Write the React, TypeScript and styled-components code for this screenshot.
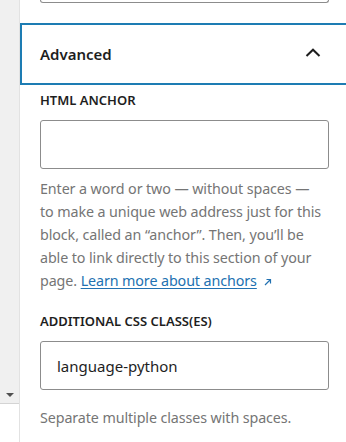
import React from "react";
import styled, { createGlobalStyle } from "styled-components";

const Global = createGlobalStyle`
  html, body { margin: 0; padding: 0; background: #fff; }
  body { width: 346px; height: 442px; overflow: hidden; font-family: "Noto Sans", "Open Sans", sans-serif; color: #1e1e1e; }
`;

const Page = styled.div`
  display: flex;
  width: 346px;
  height: 442px;
  overflow: hidden;
`;

const Gutter = styled.div`
  width: 19px;
  flex: none;
  display: flex;
  flex-direction: column;
  border-right: 1px solid #e2e2e2;
`;

const Track = styled.div`
  flex: 1;
  background: #f0f0f0;
  display: flex;
  align-items: flex-end;
  justify-content: center;
  padding-bottom: 6px;
`;

const TrackEnd = styled.div`
  height: 38px;
  border-top: 1px solid #d4d4d4;
  background: #fff;
`;

const ArrowDown = styled.div`
  width: 0;
  height: 0;
  border-left: 4px solid transparent;
  border-right: 4px solid transparent;
  border-top: 4px solid #505050;
`;

const Main = styled.div`
  flex: 1;
  min-width: 0;
  display: flex;
  flex-direction: column;
`;

const TopStub = styled.div`
  margin: 0 17px 0 20px;
  height: 2px;
  border: 1px solid #8c8c8c;
  border-top: none;
  border-radius: 0 0 3px 3px;
`;

const Header = styled.div`
  margin-top: 20px;
  height: 62px;
  width: calc(100% + 4px);
  box-sizing: border-box;
  border: 2px solid #1d7cb3;
  display: flex;
  align-items: center;
  justify-content: space-between;
  padding: 0 23px 0 18px;
`;

const Title = styled.span`
  font-size: 15px;
  font-weight: 600;
  color: #1e1e1e;
`;

const Chevron = styled.svg`
  width: 24px;
  height: 24px;
  flex: none;
  margin-top: -2px;
`;

const Body = styled.div`
  padding: 0 17px 0 20px;
  display: flex;
  flex-direction: column;
`;

const Label = styled.div<{ $top: number }>`
  margin-top: ${(p) => p.$top}px;
  font-size: 13px;
  font-weight: 600;
  text-transform: uppercase;
  line-height: 16px;
  color: #1e1e1e;
`;

const Input = styled.div`
  margin-top: 12px;
  height: 49px;
  box-sizing: border-box;
  border: 1px solid #8c8c8c;
  border-radius: 3px;
  display: flex;
  align-items: center;
  padding: 0 16px;
  font-size: 15px;
  color: #1e1e1e;
`;

const Help = styled.p<{ $top: number }>`
  margin: ${(p) => p.$top}px -12px 0 0;
  font-size: 14.3px;
  letter-spacing: -0.1px;
  line-height: 23px;
  color: #757575;
`;

const Link = styled.a`
  color: #2271b1;
  text-decoration: underline;
  text-underline-offset: 2px;
`;

const Ext = styled.svg`
  width: 10px;
  height: 10px;
  margin-left: 6px;
  vertical-align: -1px;
`;

export default function App() {
  return (
    <>
      <Global />
      <Page>
        <Gutter>
          <Track>
            <ArrowDown />
          </Track>
          <TrackEnd />
        </Gutter>
        <Main>
          <TopStub />
          <Header>
            <Title>Advanced</Title>
            <Chevron viewBox="0 0 24 24">
              <path d="M5.5 15 L12 8.7 L18.5 15" fill="none" stroke="#1e1e1e" strokeWidth="2" />
            </Chevron>
          </Header>
          <Body>
            <Label $top={7}>HTML anchor</Label>
            <Input />
            <Help $top={8}>
              Enter a word or two — without spaces —
              <br />
              to make a unique web address just for this
              <br />
              block, called an “anchor”. Then, you’ll be
              <br />
              able to link directly to this section of your
              <br />
              page. <Link href="#">Learn more about anchors</Link>
              <Ext viewBox="0 0 10 10">
                <path d="M2 8 L7.5 2.5 M3.5 2.5 H7.5 V6.5" fill="none" stroke="#2271b1" strokeWidth="1.2" />
              </Ext>
            </Help>
            <Label $top={21}>Additional CSS class(es)</Label>
            <Input>language-python</Input>
            <Help $top={16}>Separate multiple classes with spaces.</Help>
          </Body>
        </Main>
      </Page>
    </>
  );
}
